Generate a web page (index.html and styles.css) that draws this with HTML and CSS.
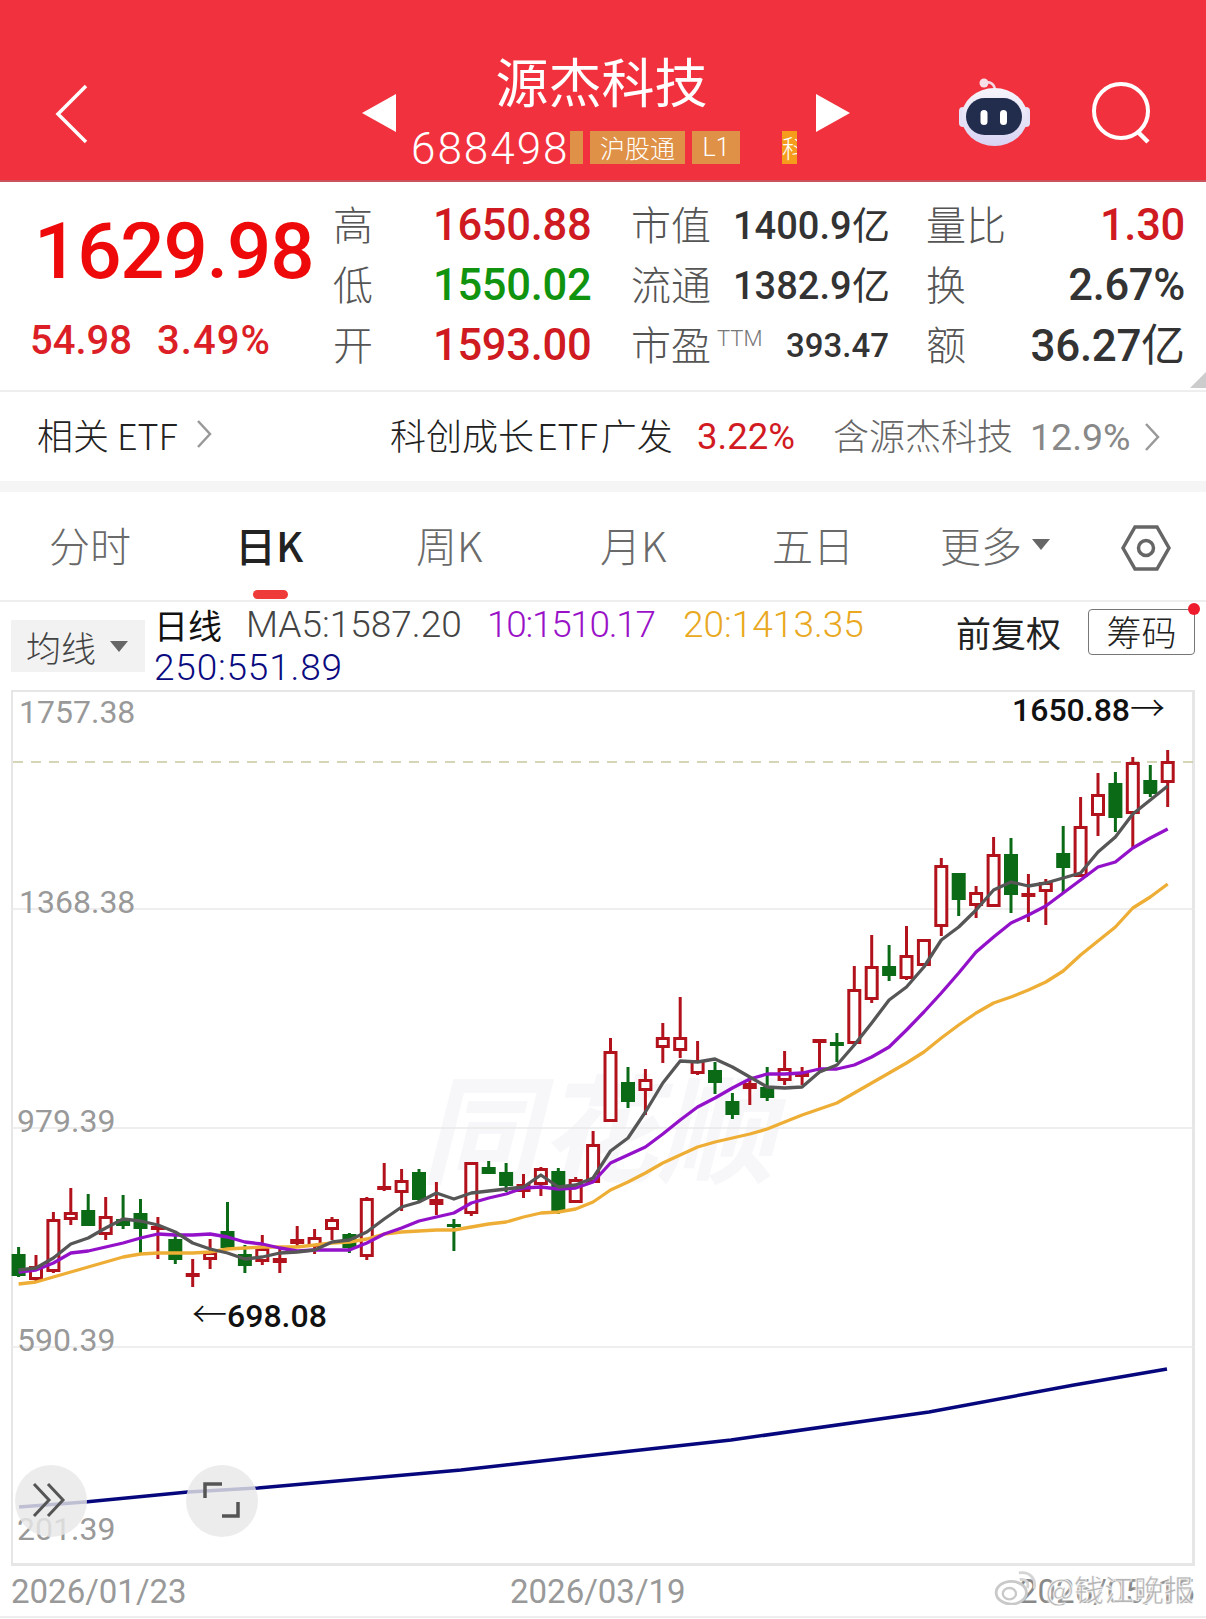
FILE: index.html
```html
<!DOCTYPE html>
<html lang="zh-CN">
<head>
    <meta charset="UTF-8">
    <meta name="viewport" content="width=device-width, initial-scale=1.0">
    <title>源杰科技</title>
    <link rel="stylesheet" href="styles.css">
</head>
<body>
    <header class="top-bar">
        <svg class="back-icon" width="34" height="60" viewBox="0 0 34 60"><path d="M31 2 L3 30 L31 58" fill="none" stroke="#fff" stroke-width="3.5"/></svg>
        <svg class="arrow-left" width="34" height="38" viewBox="0 0 34 38"><path d="M34 0 V38 L0 19 Z" fill="#fff"/></svg>
        <div class="stock-name">
            <h1>源杰科技</h1>
            <div class="stock-code">
                <span class="code-num">688498</span>
                <span class="tag tag-cut"></span>
                <span class="tag tag-hk">沪股通</span>
                <span class="tag tag-l1">L1</span>
                <span class="tag tag-ke"><span>科</span></span>
            </div>
        </div>
        <svg class="arrow-right" width="34" height="38" viewBox="0 0 34 38"><path d="M0 0 V38 L34 19 Z" fill="#fff"/></svg>
        <svg class="robot-icon" width="74" height="70" viewBox="0 0 74 70">
            <defs>
                <linearGradient id="robotHead" x1="0" y1="0" x2="0" y2="1">
                    <stop offset="0" stop-color="#f7f5fb"/>
                    <stop offset="1" stop-color="#d8d3f3"/>
                </linearGradient>
            </defs>
            <path d="M26 5 C32 3 37 6 37 13" fill="none" stroke="#f3d9e4" stroke-width="2.5"/>
            <circle cx="26" cy="5" r="4.5" fill="#f6dfe6"/>
            <rect x="1" y="29" width="8" height="20" rx="4" fill="#e4e0f5"/>
            <rect x="64" y="29" width="8" height="20" rx="4" fill="#e4e0f5"/>
            <ellipse cx="36.500" cy="39" rx="33" ry="29" fill="url(#robotHead)"/>
            <rect x="8" y="20" width="56" height="37" rx="18.500" fill="#222d4e"/>
            <rect x="22.500" y="32" width="7" height="15" rx="3.500" fill="#fff"/>
            <rect x="42" y="32" width="7" height="15" rx="3.500" fill="#fff"/>
        </svg>
        <svg class="search-icon" width="62" height="62" viewBox="0 0 62 62">
            <circle cx="30" cy="29" r="27" fill="none" stroke="#fff" stroke-width="4"/>
            <path d="M47 50 L57 60" stroke="#fff" stroke-width="4.5"/>
        </svg>
    </header>

    <section class="quote">
        <div class="price-box">
            <div class="price">1629.98</div>
            <div class="change"><span>54.98</span><span class="change-pct">3.49%</span></div>
        </div>
        <div class="quote-grid">
            <span class="q-label">高</span><span class="q-val up">1650.88</span>
            <span class="q-label">市值</span><span class="q-val2">1400.9亿</span>
            <div class="q-last"><span class="q-label">量比</span><span class="q-val up">1.30</span></div>

            <span class="q-label">低</span><span class="q-val down">1550.02</span>
            <span class="q-label">流通</span><span class="q-val2">1382.9亿</span>
            <div class="q-last"><span class="q-label">换</span><span class="q-val dark">2.67%</span></div>

            <span class="q-label">开</span><span class="q-val up">1593.00</span>
            <span class="q-label q-ttm">市盈<sup>TTM</sup></span><span class="q-val2 q-small">393.47</span>
            <div class="q-last"><span class="q-label">额</span><span class="q-val dark q-big">36.27亿</span></div>
        </div>
        <i class="corner"></i>
    </section>

    <section class="etf-row">
        <div class="etf-left">相关 ETF<svg width="16" height="30" viewBox="0 0 16 30"><path d="M2 2 L14 15 L2 28" fill="none" stroke="#999" stroke-width="2.5"/></svg></div>
        <div class="etf-name">科创成长 ETF 广发</div>
        <div class="etf-pct">3.22%</div>
        <div class="etf-hold">含源杰科技</div>
        <div class="etf-weight">12.9%</div>
        <svg class="etf-more" width="16" height="30" viewBox="0 0 16 30"><path d="M2 2 L14 15 L2 28" fill="none" stroke="#999" stroke-width="2.5"/></svg>
    </section>

    <nav class="tabs">
        <span class="tab tab-fs">分时</span>
        <span class="tab tab-day active">日K</span>
        <span class="tab tab-week">周K</span>
        <span class="tab tab-month">月K</span>
        <span class="tab tab-five">五日</span>
        <span class="tab tab-more">更多<i class="caret"></i></span>
        <svg class="hex-icon" width="50" height="50" viewBox="0 0 50 50">
            <path d="M14 4 H36 L48 25 L36 46 H14 L2 25 Z" fill="none" stroke="#666" stroke-width="3.5"/>
            <circle cx="25" cy="25" r="7.5" fill="none" stroke="#666" stroke-width="3.5"/>
        </svg>
    </nav>

    <section class="ma-bar">
        <div class="ma-select">均线<i class="caret caret-sm"></i></div>
        <div class="ma-info">
            <div class="ma-line">
                <b>日线</b><span class="ma5">MA5:1587.20</span><span class="ma10">10:1510.17</span><span class="ma20">20:1413.35</span>
            </div>
            <div class="ma-line"><span class="ma250">250:551.89</span></div>
        </div>
        <div class="ma-right">
            <span>前复权</span>
            <span class="chip-btn">筹码<i class="dot"></i></span>
        </div>
    </section>

    <section class="chart">
        <div class="watermark">同花顺</div>
        <svg id="kline" class="kline" width="1184" height="875" viewBox="11 690 1184 875"></svg>
        <span class="axis-y y1">1757.38</span>
        <span class="axis-y y2">1368.38</span>
        <span class="axis-y y3">979.39</span>
        <span class="axis-y y4">590.39</span>
        <span class="axis-y y5">201.39</span>
        <span class="mark mark-high">1650.88<i>→</i></span>
        <span class="mark mark-low"><i>←</i>698.08</span>
        <button class="round-btn btn-skip">
            <svg width="40" height="40" viewBox="0 0 40 40"><path d="M3 3 L18 19 L3 35 M17 3 L32 19 L17 35" fill="none" stroke="#555" stroke-width="3"/></svg>
        </button>
        <button class="round-btn btn-full">
            <svg width="40" height="40" viewBox="0 0 40 40"><path d="M3 17 V3 H20 M36 21 V35 H20" fill="none" stroke="#555" stroke-width="3.5"/></svg>
        </button>
    </section>

    <footer class="dates">
        <span>2026/01/23</span>
        <span>2026/03/19</span>
        <span>2026/05/15</span>
        <div class="weibo">
            <svg width="44" height="34" viewBox="0 0 46 36">
                <ellipse cx="18" cy="23" rx="16" ry="12" fill="#fff" stroke="#c9c9c9" stroke-width="3"/>
                <ellipse cx="16" cy="24" rx="7" ry="6" fill="none" stroke="#c9c9c9" stroke-width="2.5"/>
                <path d="M26 2 C37 0 45 8 42 19 M27 9 C33 8 37 12 35 18" fill="none" stroke="#d4d4d4" stroke-width="3"/>
            </svg>
            <span>@钱江晚报</span>
        </div>
    </footer>

    <script src="chart.js"></script>
</body>
</html>
```

FILE: styles.css
```css
* {
    box-sizing: border-box;
}
body {
    margin: 0;
    width: 1206px;
    height: 1619px;
    overflow: hidden;
    background: #fff;
    font-family: "Noto Sans CJK SC", "Liberation Sans", sans-serif;
}

/* top bar */
.top-bar {
    height: 182px;
    background: #f1323e;
    border-bottom: 2px solid #c9525c;
    display: flex;
    align-items: flex-start;
    color: #fff;
}
.back-icon {
    margin: 84px 0 0 55px;
}
.arrow-left {
    margin: 94px 0 0 273px;
}
.stock-name {
    width: 420px;
    text-align: center;
}
.stock-name h1 {
    margin: 42px 0 0;
    padding-right: 9px;
    height: 76px;
    font-size: 53px;
    line-height: 76px;
    font-weight: 400;
}
.stock-code {
    display: flex;
    align-items: flex-start;
    height: 53px;
    margin: 8px 0 0 15px;
    overflow: hidden;
}
.code-num {
    font-family: Roboto, sans-serif;
    font-weight: 300;
    font-size: 44px;
    line-height: 46px;
    letter-spacing: 2px;
    width: 159px;
    text-align: left;
}
.tag {
    display: block;
    height: 33px;
    line-height: 33px;
    font-size: 25px;
    font-weight: 300;
    background: #df9147;
    text-align: center;
    margin-top: 5px;
}
.tag-cut {
    width: 13px;
}
.tag-hk {
    width: 95px;
    margin-left: 7px;
}
.tag-l1 {
    width: 48px;
    margin-left: 7px;
    font-family: Roboto, sans-serif;
}
.tag-ke {
    width: 15px;
    margin-left: 42px;
    background: #f59c1c;
    overflow: hidden;
    text-align: left;
}
.arrow-right {
    margin: 94px 0 0 0;
}
.robot-icon {
    margin: 78px 0 0 108px;
}
.search-icon {
    margin: 82px 0 0 59px;
}

/* quote block */
.quote {
    position: relative;
    height: 210px;
    display: flex;
    border-bottom: 2px solid #eee;
}
.price-box {
    width: 335px;
    flex-shrink: 0;
}
.price {
    font-family: Roboto, sans-serif;
    font-weight: 500;
    font-size: 78px;
    line-height: 80px;
    letter-spacing: -1.2px;
    color: #ee0a0a;
    margin: 30px 0 0 34px;
}
.change {
    display: flex;
    gap: 25px;
    font-family: Roboto, sans-serif;
    font-weight: 500;
    font-size: 40px;
    line-height: 46px;
    color: #dc1f26;
    margin: 26px 0 0 30px;
}
.change-pct {
    letter-spacing: 1px;
}
.quote-grid {
    display: grid;
    grid-template-columns: 100px 198px 100px 195px 257px;
    grid-auto-rows: 60px;
    align-items: center;
    padding-top: 14px;
}
.q-label {
    font-size: 40px;
    font-weight: 300;
    color: #555;
    line-height: 60px;
    margin: 0 0 6px -2px;
}
.q-val {
    font-family: Roboto, sans-serif;
    font-weight: 500;
    font-size: 43.5px;
    line-height: 60px;
    letter-spacing: -0.3px;
    margin-left: -2px;
}
.q-val2 {
    font-family: Roboto, sans-serif;
    font-weight: 500;
    font-size: 38px;
    line-height: 60px;
    color: #333;
    width: 156px;
    text-align: right;
    white-space: nowrap;
}
.q-small {
    font-size: 33px;
}
.q-ttm {
    white-space: nowrap;
}
.q-ttm sup {
    font-family: Roboto, sans-serif;
    font-size: 22px;
    font-weight: 300;
    color: #777;
    line-height: 0;
    margin-left: 6px;
}
.q-last {
    display: flex;
    justify-content: space-between;
    align-items: center;
}
.q-big {
    font-size: 44px;
}
.up {
    color: #cf1a22;
}
.down {
    color: #109410;
}
.dark {
    color: #333;
}
.corner {
    position: absolute;
    right: 0;
    bottom: 2px;
    border-style: solid;
    border-width: 0 0 16px 16px;
    border-color: transparent transparent #ccc transparent;
}

/* etf row */
.etf-row {
    height: 100px;
    border-bottom: 11px solid #f5f5f5;
    display: flex;
    align-items: center;
    font-size: 36px;
    font-weight: 300;
    color: #222;
    white-space: nowrap;
}
.etf-left {
    display: flex;
    align-items: center;
    gap: 18px;
    margin: 0 0 6px 37px;
    width: 353px;
}
.etf-name {
    width: 307px;
    margin-bottom: 6px;
    word-spacing: -5px;
}
.etf-pct {
    width: 136px;
    color: #d11a22;
    font-family: Roboto, sans-serif;
    font-weight: 400;
    font-size: 36.5px;
}
.etf-hold {
    width: 197px;
    margin-bottom: 6px;
    color: #666;
}
.etf-weight {
    width: 114px;
    color: #888;
    font-family: Roboto, sans-serif;
    font-weight: 400;
    font-size: 37.5px;
}

/* tabs */
.tabs {
    position: relative;
    height: 110px;
    display: flex;
    align-items: center;
    border-bottom: 2px solid #eee;
}
.tab {
    font-size: 41px;
    font-weight: 300;
    color: #6a6a6a;
    white-space: nowrap;
    margin-top: -4px;
}
.tab-fs {
    margin-left: 49px;
    width: 186px;
}
.tab-day {
    width: 181px;
}
.tab-week {
    width: 184px;
}
.tab-month {
    width: 172px;
}
.tab-five {
    width: 168px;
}
.tab-more {
    width: 180px;
    display: flex;
    align-items: center;
}
.active {
    position: relative;
    color: #222;
    font-weight: 500;
}
.active::after {
    content: "";
    position: absolute;
    left: 18px;
    top: 76px;
    width: 35px;
    height: 9px;
    border-radius: 5px;
    background: #ee3a38;
}
.caret {
    display: block;
    width: 0;
    height: 0;
    margin-left: 10px;
    border-style: solid;
    border-width: 11px 9px 0;
    border-color: #666 transparent transparent;
}
.hex-icon {
    position: absolute;
    left: 1121px;
    top: 31px;
}

/* ma legend */
.ma-bar {
    height: 88px;
    display: flex;
    font-family: Roboto, "Noto Sans CJK SC", sans-serif;
    white-space: nowrap;
}
.ma-select {
    width: 134px;
    height: 52px;
    margin: 18px 0 0 11px;
    padding-left: 15px;
    background: #f2f2f2;
    display: flex;
    align-items: center;
    font-family: "Noto Sans CJK SC", sans-serif;
    font-size: 35px;
    font-weight: 300;
    color: #444;
}
.caret-sm {
    margin-left: 14px;
}
.ma-info {
    width: 802px;
    margin-left: 9px;
    font-size: 37px;
    font-weight: 300;
}
.ma-line {
    display: flex;
    height: 41px;
    line-height: 41px;
    margin-top: 2px;
}
.ma-line b {
    font-family: "Noto Sans CJK SC", sans-serif;
    font-weight: 400;
    font-size: 34px;
    color: #111;
    width: 92px;
}
.ma5 {
    color: #444;
    width: 241px;
}
.ma10 {
    color: #9a12c8;
    width: 196px;
    letter-spacing: -1.3px;
}
.ma20 {
    color: #e9a820;
}
.ma250 {
    color: #0b0b80;
    letter-spacing: 0.8px;
}
.ma-right {
    display: flex;
    align-items: flex-start;
    gap: 27px;
    margin-top: 7px;
    font-family: "Noto Sans CJK SC", sans-serif;
    font-size: 35px;
    color: #222;
    font-weight: 400;
}
.ma-right > span:first-child {
    line-height: 46px;
}
.chip-btn {
    position: relative;
    width: 107px;
    height: 46px;
    line-height: 42px;
    text-align: center;
    border: 1.5px solid #777;
    border-radius: 4px;
    font-weight: 300;
}
.dot {
    position: absolute;
    right: -6px;
    top: -7px;
    width: 12px;
    height: 12px;
    border-radius: 50%;
    background: #ee1c2c;
}

/* chart */
.chart {
    position: relative;
    width: 1184px;
    height: 876px;
    margin-left: 11px;
    border: 2px solid #e6e6e6;
    border-width: 2px 3px 3px 2px;
}
.kline {
    position: absolute;
    left: -2px;
    top: -2px;
}
.watermark {
    position: absolute;
    left: 408px;
    top: 345px;
    font-size: 118px;
    font-weight: 700;
    font-style: italic;
    color: #f7f7fa;
    white-space: nowrap;
}
.axis-y {
    position: absolute;
    font-family: Roboto, sans-serif;
    font-size: 32px;
    line-height: 40px;
    color: #999;
}
.y1 {
    left: 6px;
    top: 0;
}
.y2 {
    left: 6px;
    top: 190px;
}
.y3 {
    left: 4px;
    top: 409px;
}
.y4 {
    left: 4px;
    top: 628px;
}
.y5 {
    left: 4px;
    top: 817px;
}
.mark {
    position: absolute;
    font-family: Roboto, sans-serif;
    font-weight: 500;
    font-size: 32px;
    line-height: 40px;
    color: #111;
    white-space: nowrap;
}
.mark i {
    font-family: "Noto Sans CJK SC", sans-serif;
    font-style: normal;
    font-weight: 300;
    font-size: 35px;
}
.mark-high {
    left: 999px;
    top: -6px;
}
.mark-low {
    left: 179px;
    top: 600px;
}
.round-btn {
    position: absolute;
    top: 773px;
    width: 72px;
    height: 72px;
    padding: 0;
    border: none;
    border-radius: 50%;
    background: rgba(232, 232, 232, 0.82);
    display: flex;
    align-items: center;
    justify-content: center;
}
.btn-skip {
    left: 2px;
}
.btn-full {
    left: 173px;
}

/* date axis */
.dates {
    position: relative;
    height: 52px;
    padding: 0 11px;
    display: flex;
    align-items: center;
    font-family: Roboto, sans-serif;
    font-size: 33px;
    color: #999;
    border-bottom: 2px solid #eee;
}
.dates > span:nth-child(1) {
    width: 499px;
}
.dates > span:nth-child(2) {
    width: 509px;
}
.dates > span:nth-child(3) {
    color: #888;
}
.weibo {
    position: absolute;
    right: 12px;
    top: 0;
    display: flex;
    align-items: center;
    gap: 8px;
    font-family: "Noto Sans CJK SC", sans-serif;
    font-size: 30px;
    font-weight: 400;
    color: #b5b5b5;
    -webkit-text-stroke: 0.5px #fff;
    text-shadow: 0 0 3px #fff, 0 0 3px #fff;
}
```

FILE: chart.js
```js
// [high, low, bodyTop, bodyBottom, up?]
const candles = [
    [1247, 1277, 1254, 1276, 0], [1255, 1282, 1266, 1280, 1], [1212, 1273, 1219, 1272, 1], [1188, 1225, 1212, 1220, 1],
    [1194, 1226, 1210, 1226, 0], [1197, 1240, 1216, 1235, 1], [1195, 1229, 1219, 1226, 0], [1199, 1255, 1213, 1229, 0],
    [1217, 1259, 1226, 1229, 1], [1236, 1264, 1239, 1260, 0], [1259, 1287, 1273, 1277, 1], [1239, 1269, 1252, 1260, 1],
    [1202, 1248, 1231, 1248, 0], [1245, 1273, 1254, 1266, 0], [1235, 1265, 1248, 1262, 1], [1248, 1273, 1258, 1263, 1],
    [1226, 1247, 1239, 1244, 1], [1229, 1254, 1237, 1247, 1], [1217, 1240, 1219, 1230, 1], [1233, 1253, 1234, 1248, 0],
    [1197, 1260, 1198, 1257, 1], [1163, 1191, 1186, 1190, 1], [1169, 1211, 1180, 1193, 1], [1169, 1201, 1172, 1200, 0],
    [1182, 1215, 1199, 1205, 1], [1219, 1251, 1224, 1227, 0], [1162, 1216, 1162, 1214, 1], [1161, 1174, 1167, 1174, 0],
    [1163, 1192, 1172, 1186, 0], [1174, 1198, 1184, 1192, 1], [1167, 1196, 1168, 1185, 1], [1168, 1214, 1171, 1211, 0],
    [1177, 1203, 1179, 1203, 1], [1131, 1183, 1144, 1183, 1], [1038, 1122, 1051, 1122, 1], [1067, 1108, 1082, 1102, 0],
    [1069, 1115, 1079, 1091, 1], [1023, 1063, 1037, 1048, 1], [997, 1058, 1037, 1051, 1], [1041, 1075, 1060, 1074, 1],
    [1062, 1094, 1070, 1083, 0], [1093, 1119, 1101, 1115, 0], [1078, 1105, 1083, 1089, 1], [1067, 1101, 1087, 1098, 0],
    [1051, 1085, 1068, 1081, 1], [1067, 1085, 1073, 1077, 1], [1039, 1072, 1039, 1041, 1], [1033, 1062, 1042, 1046, 0],
    [966, 1045, 989, 1044, 1], [935, 1003, 966, 1000, 1], [945, 981, 966, 976, 0], [926, 980, 955, 979, 1],
    [939, 966, 939, 966, 1], [858, 936, 865, 927, 1], [873, 916, 873, 900, 0], [886, 918, 892, 906, 1],
    [837, 907, 854, 907, 1], [838, 913, 854, 895, 0], [874, 922, 893, 895, 1], [879, 925, 882, 892, 1],
    [826, 893, 853, 868, 0], [797, 877, 826, 877, 1], [773, 836, 794, 816, 1], [772, 832, 783, 818, 0],
    [757, 848, 762, 814, 1], [765, 797, 780, 794, 0], [750, 807, 761, 783, 1]
];

const ma5 = [1270, 1268, 1258, 1244, 1238, 1228, 1219, 1221, 1225, 1232, 1243, 1249, 1253, 1259, 1257, 1253, 1252, 1250, 1242, 1240,
    1232, 1219, 1207, 1202, 1193, 1199, 1193, 1191, 1189, 1187, 1175, 1187, 1185, 1178, 1151, 1138, 1112, 1083, 1061, 1062,
    1059, 1067, 1077, 1087, 1088, 1087, 1072, 1065, 1045, 1023, 1000, 987, 967, 940, 927, 910, 890, 882, 886, 883,
    878, 873, 852, 837, 814, 800, 786];
const ma10 = [1272, 1270, 1263, 1253, 1251, 1247, 1243, 1238, 1234, 1235, 1235, 1234, 1237, 1242, 1244, 1248, 1251, 1250, 1250, 1250,
    1243, 1234, 1228, 1221, 1217, 1213, 1203, 1198, 1194, 1188, 1187, 1189, 1188, 1182, 1163, 1155, 1147, 1134, 1120, 1107,
    1098, 1088, 1079, 1074, 1074, 1073, 1069, 1069, 1065, 1057, 1047, 1030, 1012, 993, 973, 952, 937, 923, 915, 906,
    893, 880, 867, 862, 848, 838, 829];
const ma20 = [1284, 1282, 1277, 1272, 1267, 1262, 1257, 1254, 1253, 1253, 1253, 1252, 1249, 1248, 1247, 1247, 1247, 1245, 1243, 1242,
    1239, 1234, 1232, 1231, 1230, 1230, 1227, 1224, 1222, 1217, 1213, 1212, 1209, 1202, 1190, 1182, 1173, 1163, 1155, 1147,
    1142, 1138, 1134, 1129, 1122, 1115, 1109, 1103, 1093, 1083, 1073, 1063, 1052, 1038, 1025, 1013, 1003, 997, 990, 982,
    971, 955, 941, 927, 908, 897, 884];
const ma250 = [[19, 1507], [85, 1502], [188, 1492], [258, 1488], [461, 1470], [577, 1457], [731, 1440], [929, 1412], [1074, 1385], [1167, 1369]];

const RED = '#b2121c';
const GREEN = '#0a6a16';
const startX = 18.6;
const stepX = 17.41;
const xOf = (i) => +(startX + i * stepX).toFixed(1);

let svg = '';

// grid
[909, 1128, 1347].forEach((y) => {
    svg += `<line x1="11" x2="1195" y1="${y}" y2="${y}" stroke="#e8e8e8" stroke-width="1.5"/>`;
});
svg += '<line x1="13" x2="1193" y1="762" y2="762" stroke="#c9c9a0" stroke-width="1.5" stroke-dasharray="10 8"/>';

// candles
candles.forEach((c, i) => {
    const [high, low, top, bottom, up] = c;
    const x = xOf(i);
    const color = up ? RED : GREEN;
    svg += `<line x1="${x}" x2="${x}" y1="${high}" y2="${low}" stroke="${color}" stroke-width="3"/>`;
    if (up) {
        svg += `<rect x="${x - 5.5}" y="${top + 1.5}" width="11" height="${Math.max(bottom - top - 3, 1)}" fill="#fff" stroke="${color}" stroke-width="3"/>`;
    } else {
        svg += `<rect x="${x - 7}" y="${top}" width="14" height="${bottom - top}" fill="${color}"/>`;
    }
});

// moving averages
function drawLine(points, color, width) {
    svg += `<polyline points="${points.join(' ')}" fill="none" stroke="${color}" stroke-width="${width}" stroke-linejoin="round"/>`;
}
drawLine(ma250.map((p) => p.join(',')), '#07077d', 3.5);
drawLine(ma20.map((y, i) => `${xOf(i)},${y}`), '#eeae35', 3.3);
drawLine(ma10.map((y, i) => `${xOf(i)},${y}`), '#9312c9', 3.3);
drawLine(ma5.map((y, i) => `${xOf(i)},${y}`), '#565656', 3.3);

document.getElementById('kline').innerHTML = svg;
```
